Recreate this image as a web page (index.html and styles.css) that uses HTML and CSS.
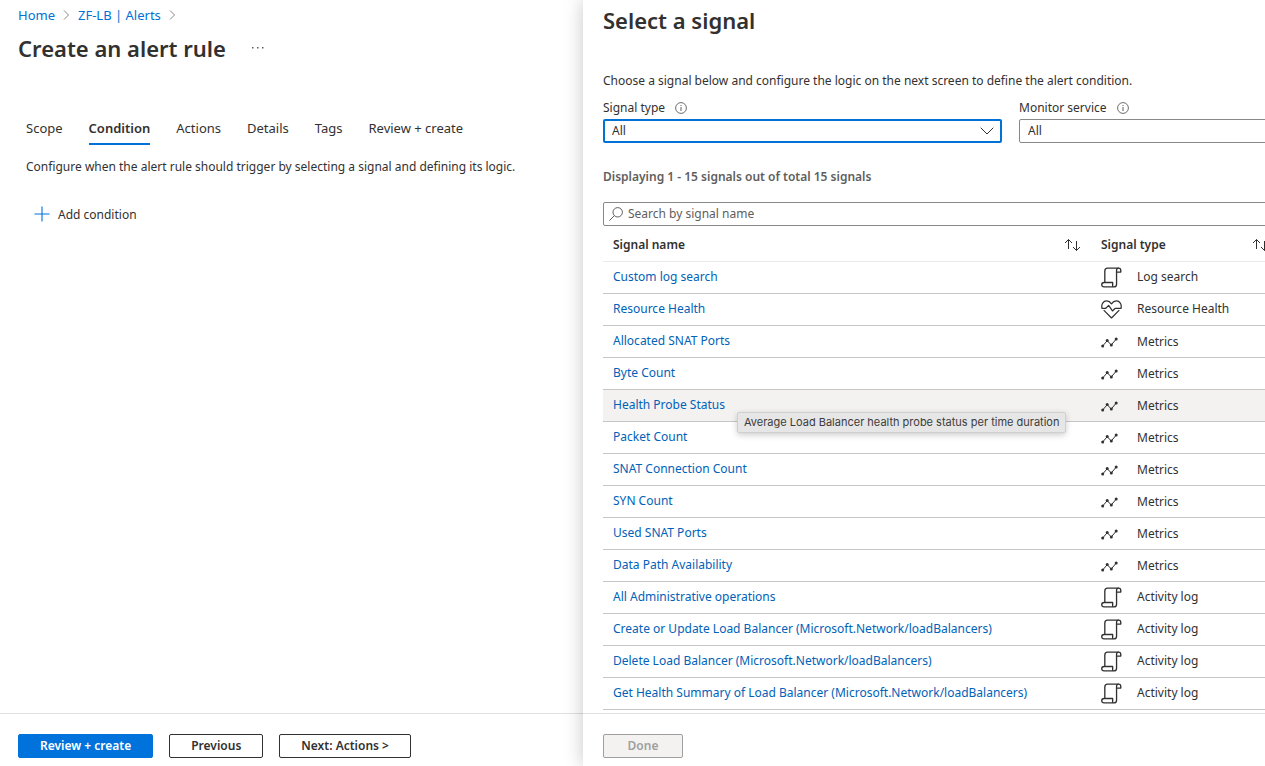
FILE: index.html
```html
<!DOCTYPE html>
<html lang="en">
<head>
<meta charset="utf-8">
<meta name="viewport" content="width=device-width, initial-scale=1">
<title>Create an alert rule</title>
<link rel="stylesheet" href="styles.css">
</head>
<body>
<svg class="sprite" aria-hidden="true">
  <symbol id="log" viewBox="0 0 22 22"><g fill="none" stroke="#323130" stroke-width="1.400" stroke-linejoin="round"><path d="M4 16V4.200Q4 1.200 6.800 1.200H18.500"/><path d="M16.300 5.300V18Q16.300 20.800 13.600 20.800H3.200Q.8 20.800 .8 18.500T3.200 16.200H12.200V20.800"/><path d="M16.300 5.300V3.400Q16.400 1.200 18.500 1.200T20.700 3.400V5.300Z"/></g></symbol>
  <symbol id="heart" viewBox="0 0 22 20"><g fill="none" stroke="#323130" stroke-width="1.300" stroke-linejoin="round"><path d="M1 8.700C0 4.300 2.300 1 5.900 1C8 1 9.700 2.100 11 4C12.300 2.100 14 1 16.100 1C19.700 1 22 4.300 21 8.700"/><path d="M.6 8.700H5L8 5.700L12 11.500L15 8.700H21.400"/><path d="M2.800 10.700L11 18.900L19.200 10.700"/></g></symbol>
  <symbol id="metrics" viewBox="0 0 17 11"><path d="M1.700 9L6.200 3.700L10.300 8L15.200 2" fill="none" stroke="#323130"/><g fill="#323130"><circle cx="1.700" cy="9" r="1.500"/><circle cx="6.200" cy="3.500" r="1.500"/><circle cx="10.300" cy="8" r="1.500"/><circle cx="15.200" cy="2" r="1.500"/></g></symbol>
  <symbol id="info" viewBox="0 0 12 12"><circle cx="6" cy="6" r="5.400" fill="none" stroke="#605e5c" stroke-width=".9"/><path d="M6 5V9M6 3V4" stroke="#605e5c"/></symbol>
  <symbol id="sort" viewBox="0 0 17 14"><path d="M4.500 11V1.500M1 5L4.500 1.500L8 5M12.500 3V12.500M9 9L12.500 12.500L16 9" fill="none" stroke="#323130"/></symbol>
  <symbol id="crumb" viewBox="0 0 7 10"><path d="M1 .5L5.500 5L1 9.500" fill="none" stroke="#8a8886"/></symbol>
</svg>
<div class="shell">
  <main class="page">
    <div class="page-content">
      <nav class="crumbs" aria-label="Breadcrumb">
        <a href="#">Home</a><svg class="crumb-icon"><use href="#crumb"/></svg>
        <a href="#">ZF-LB | Alerts</a><svg class="crumb-icon"><use href="#crumb"/></svg>
      </nav>
      <div class="title-row">
        <h1 class="title">Create an alert rule</h1>
        <button class="more" type="button" aria-label="More"><svg class="more-icon" viewBox="0 0 12 2"><path d="M0 0h1.500v1.500H0zM5 0h1.500v1.500H5zM10 0h1.500v1.500H10z" fill="#605e5c"/></svg></button>
      </div>
      <nav class="tabs" aria-label="Steps">
        <a class="tab" href="#">Scope</a>
        <a class="tab tab-active" href="#" aria-current="step">Condition</a>
        <a class="tab" href="#">Actions</a>
        <a class="tab" href="#">Details</a>
        <a class="tab" href="#">Tags</a>
        <a class="tab" href="#">Review + create</a>
      </nav>
      <p class="intro">Configure when the alert rule should trigger by selecting a signal and defining its logic.</p>
      <button class="add" type="button"><svg class="add-icon" viewBox="0 0 16 16"><path d="M8 .5V15.500M.5 8H15.500" stroke="#0072db" stroke-width="1.100"/></svg>Add condition</button>
    </div>
    <footer class="footer">
      <button class="btn btn-primary" type="button">Review + create</button>
      <button class="btn" type="button">Previous</button>
      <button class="btn" type="button">Next: Actions &gt;</button>
    </footer>
  </main>
  <section class="panel" aria-labelledby="panel-title">
    <div class="panel-content">
      <h2 class="title" id="panel-title">Select a signal</h2>
      <p class="hint">Choose a signal below and configure the logic on the next screen to define the alert condition.</p>
      <div class="filters">
        <div class="field">
          <div class="field-head"><label for="type">Signal type</label><svg class="info-icon"><use href="#info"/></svg></div>
          <div class="select-wrap"><select class="select select-focus" id="type"><option>All</option></select><svg class="chevron" viewBox="0 0 14 8"><path d="M.7 .7L7 7L13.300 .7" fill="none" stroke="#323130"/></svg></div>
        </div>
        <div class="field">
          <div class="field-head"><label for="service">Monitor service</label><svg class="info-icon"><use href="#info"/></svg></div>
          <div class="select-wrap"><select class="select" id="service"><option>All</option></select></div>
        </div>
      </div>
      <p class="count">Displaying 1 - 15 signals out of total 15 signals</p>
      <div class="search">
        <svg class="search-icon" viewBox="0 0 14 14"><circle cx="8.700" cy="5.300" r="4.700" fill="none" stroke="#605e5c"/><path d="M5.400 8.600L.4 13.600" stroke="#605e5c"/></svg>
        <input class="search-input" type="text" aria-label="Search by signal name" placeholder="Search by signal name">
      </div>
      <table class="signals">
        <colgroup><col class="col-name"><col></colgroup>
        <thead><tr>
          <th scope="col"><div class="head">Signal name<svg class="sort-icon"><use href="#sort"/></svg></div></th>
          <th scope="col"><div class="head head-type">Signal type<svg class="sort-icon"><use href="#sort"/></svg></div></th>
        </tr></thead>
        <tbody>
          <tr><td><a href="#">Custom log search</a></td><td><div class="kind"><span class="slot"><svg class="log-icon"><use href="#log"/></svg></span>Log search</div></td></tr>
          <tr><td><a href="#">Resource Health</a></td><td><div class="kind"><span class="slot"><svg class="heart-icon"><use href="#heart"/></svg></span>Resource Health</div></td></tr>
          <tr><td><a href="#">Allocated SNAT Ports</a></td><td><div class="kind kind-metric"><span class="slot"><svg class="metrics-icon"><use href="#metrics"/></svg></span>Metrics</div></td></tr>
          <tr><td><a href="#">Byte Count</a></td><td><div class="kind kind-metric"><span class="slot"><svg class="metrics-icon"><use href="#metrics"/></svg></span>Metrics</div></td></tr>
          <tr class="row-hover"><td><div class="tip-anchor"><a href="#" aria-describedby="tip">Health Probe Status</a><span class="tip" id="tip" role="tooltip">Average Load Balancer health probe status per time duration</span></div></td><td><div class="kind kind-metric"><span class="slot"><svg class="metrics-icon"><use href="#metrics"/></svg></span>Metrics</div></td></tr>
          <tr><td><a href="#">Packet Count</a></td><td><div class="kind kind-metric"><span class="slot"><svg class="metrics-icon"><use href="#metrics"/></svg></span>Metrics</div></td></tr>
          <tr><td><a href="#">SNAT Connection Count</a></td><td><div class="kind kind-metric"><span class="slot"><svg class="metrics-icon"><use href="#metrics"/></svg></span>Metrics</div></td></tr>
          <tr><td><a href="#">SYN Count</a></td><td><div class="kind kind-metric"><span class="slot"><svg class="metrics-icon"><use href="#metrics"/></svg></span>Metrics</div></td></tr>
          <tr><td><a href="#">Used SNAT Ports</a></td><td><div class="kind kind-metric"><span class="slot"><svg class="metrics-icon"><use href="#metrics"/></svg></span>Metrics</div></td></tr>
          <tr><td><a href="#">Data Path Availability</a></td><td><div class="kind kind-metric"><span class="slot"><svg class="metrics-icon"><use href="#metrics"/></svg></span>Metrics</div></td></tr>
          <tr><td><a href="#">All Administrative operations</a></td><td><div class="kind"><span class="slot"><svg class="log-icon"><use href="#log"/></svg></span>Activity log</div></td></tr>
          <tr><td><a href="#">Create or Update Load Balancer (Microsoft.Network/loadBalancers)</a></td><td><div class="kind"><span class="slot"><svg class="log-icon"><use href="#log"/></svg></span>Activity log</div></td></tr>
          <tr><td><a href="#">Delete Load Balancer (Microsoft.Network/loadBalancers)</a></td><td><div class="kind"><span class="slot"><svg class="log-icon"><use href="#log"/></svg></span>Activity log</div></td></tr>
          <tr><td><a href="#">Get Health Summary of Load Balancer (Microsoft.Network/loadBalancers)</a></td><td><div class="kind"><span class="slot"><svg class="log-icon"><use href="#log"/></svg></span>Activity log</div></td></tr>
        </tbody>
      </table>
    </div>
    <footer class="footer footer-panel">
      <button class="btn btn-done" type="button" disabled>Done</button>
    </footer>
  </section>
</div>
</body>
</html>
```
FILE: styles.css
```css
* { box-sizing: border-box; }
body {
  margin: 0;
  color: #323130;
  background: #fff;
  font: 12px/16px "Noto Sans", "Open Sans", sans-serif;
}
h1, h2, p { margin: 0; }
a { color: #0062b8; text-decoration: none; }
button, input, select { font: inherit; color: inherit; }
svg { display: block; flex: none; }
.sprite { position: absolute; width: 0; height: 0; }

.shell {
  display: grid;
  grid-template-columns: 583fr 682fr;
  height: 100vh;
  overflow: hidden;
}
.page, .panel { display: flex; flex-direction: column; min-width: 0; min-height: 0; }
.page-content { flex: 1; min-height: 0; padding: 7px 18px 0; }
.panel {
  z-index: 1;
  overflow: hidden;
  background: #fff;
  box-shadow: 0 0 18px rgba(0, 0, 0, .22);
}
.panel-content { flex: 1; min-width: 835px; min-height: 0; overflow: hidden; padding: 6px 0 0 20px; }

.crumbs { display: flex; align-items: center; gap: 8px; font-size: 13px; }
.crumbs a { color: #0072d6; }
.crumb-icon { width: 7px; height: 10px; }
.title-row { display: flex; align-items: center; gap: 26px; margin-top: 11px; }
.title { font-size: 22px; line-height: 28px; font-weight: 600; }
.more { padding: 0; border: 0; background: none; }
.more-icon { width: 12px; height: 2px; }

.tabs { display: flex; gap: 26px; margin-top: 55px; padding: 0 8px; }
.tab { padding: 3px 0 7px; border-bottom: 2px solid transparent; color: #323130; font-size: 13px; }
.tab-active { border-color: #0072d6; font-weight: 600; }
.intro { margin-top: 14px; padding: 0 8px; white-space: nowrap; }
.add {
  display: flex;
  align-items: center;
  gap: 8px;
  margin: 30px 0 0 16px;
  padding: 0;
  border: 0;
  background: none;
  line-height: 20px;
}
.add-icon { width: 16px; height: 16px; margin-bottom: 2px; }

.footer { display: flex; gap: 16px; padding: 20px 18px 8px; border-top: 1px solid #e1dfdd; }
.footer-panel { padding-left: 20px; }
.btn {
  height: 24px;
  padding: 0 21px;
  border: 1px solid #323130;
  border-radius: 2px;
  background: #fff;
  font-weight: 600;
  line-height: 20px;
  white-space: nowrap;
}
.btn-primary { border-color: #0072db; background: #0072db; color: #fff; }
.btn-done { min-width: 80px; border-color: #a19f9d; background: #f3f2f1; color: #a19f9d; }

.hint { margin-top: 39px; }
.filters { display: flex; gap: 17px; margin-top: 11px; }
.field { flex: 1; }
.field-head { display: flex; align-items: center; gap: 10px; margin-bottom: 3px; }
.info-icon { width: 12px; height: 12px; }
.select-wrap { display: grid; align-items: center; }
.select {
  grid-area: 1 / 1;
  width: 100%;
  height: 24px;
  padding: 0 8px;
  border: 1px solid #8a8886;
  border-radius: 2px;
  background: #fff;
  appearance: none;
}
.select-focus { padding: 0 7px; border: 2px solid #0072d6; }
.chevron { grid-area: 1 / 1; justify-self: end; width: 14px; height: 8px; margin-right: 8px; pointer-events: none; }
.count { margin-top: 26px; color: #605e5c; font-weight: 600; }
.search {
  display: flex;
  align-items: center;
  gap: 5px;
  height: 24px;
  margin-top: 17px;
  padding-left: 5px;
  border: 1px solid #8a8886;
  border-radius: 2px;
}
.search-icon { width: 14px; height: 14px; }
.search-input { flex: 1; min-width: 0; padding: 0; border: 0; outline: 0; background: none; }
.search-input::placeholder { color: #605e5c; opacity: 1; }

.signals { width: 100%; table-layout: fixed; border-collapse: separate; border-spacing: 0; }
.col-name { width: 488px; }
.signals th { height: 36px; padding: 2px 10px 0; border-bottom: 1px solid #edebe9; font-weight: 600; text-align: left; }
.signals td { height: 32px; padding: 0 10px 2px; border-bottom: 1px solid #c8c6c4; white-space: nowrap; }
.head { display: flex; align-items: center; justify-content: space-between; }
.head-type { width: 168px; }
.sort-icon { width: 17px; height: 14px; }
.row-hover { background: #f3f2f1; }
.kind { display: flex; align-items: center; }
.kind-metric { padding-top: 2px; }
.slot { display: flex; align-items: center; width: 36px; padding-top: 2px; }
.log-icon { width: 21px; height: 21px; }
.heart-icon { width: 21px; height: 19px; }
.metrics-icon { width: 17px; height: 11px; }
.tip-anchor { position: relative; }
.tip {
  position: absolute;
  z-index: 2;
  top: 15px;
  left: 124px;
  padding: 2px 6px;
  border: 1px solid #d0d0d0;
  border-radius: 2px;
  background: #e6e6e6;
  box-shadow: 0 2px 6px rgba(0, 0, 0, .2);
  color: #3c3c3c;
  font: 11px/15px Inter, sans-serif;
}
```
